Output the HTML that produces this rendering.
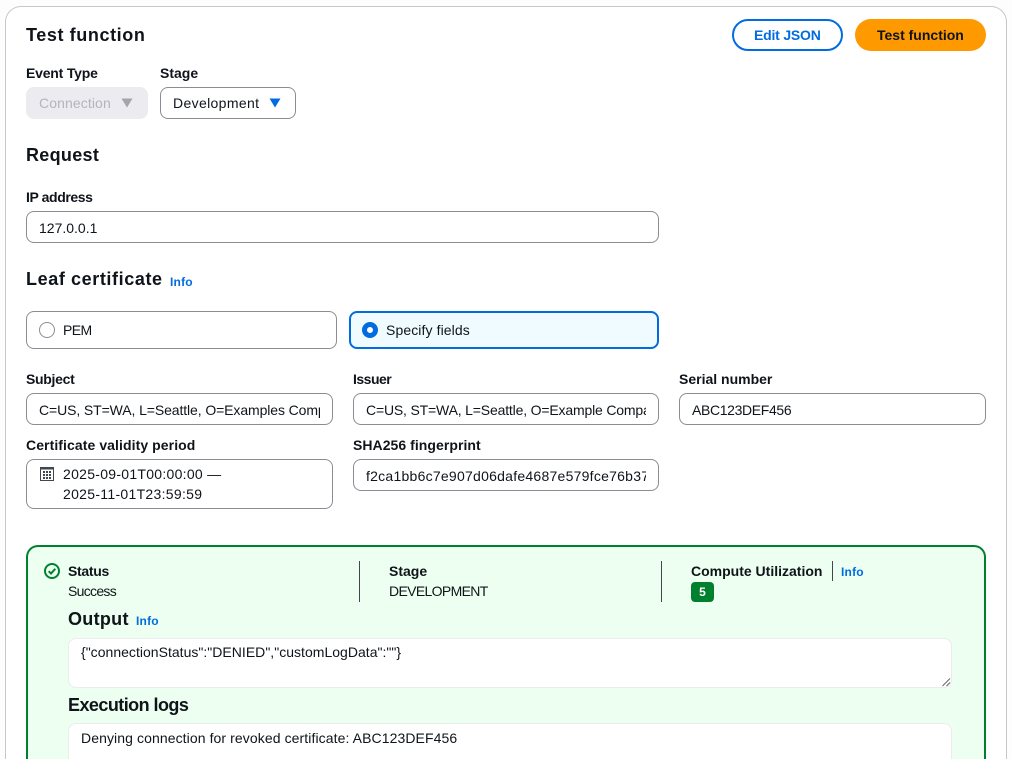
<!DOCTYPE html>
<html><head><meta charset="utf-8">
<style>
html,body{margin:0;padding:0;background:#fdfdfd;width:1012px;height:759px;overflow:hidden;}
#w{position:absolute;left:0;top:0;width:1012px;height:759px;overflow:hidden;font-family:"Liberation Sans",sans-serif;color:#0f141a;font-size:14px;}
.a{position:absolute;box-sizing:border-box;}
.t{position:absolute;white-space:nowrap;line-height:20px;}
.b{font-weight:bold;}
.h{font-weight:bold;font-size:18px;line-height:24px;position:absolute;white-space:nowrap;}
.i{position:absolute;white-space:nowrap;color:#006ce0;font-weight:bold;font-size:12px;line-height:14px;letter-spacing:.2px;}
.f{position:absolute;box-sizing:border-box;background:#fff;border:1px solid #8c8c94;border-radius:8px;height:32px;overflow:hidden;}
.f span{position:absolute;left:12px;right:12px;top:6px;line-height:20px;white-space:nowrap;overflow:hidden;}
</style></head><body><div id="w">
<div class="a" style="left:5px;top:6px;width:1002px;height:753px;background:#fff;border:1px solid #c6c6cd;border-bottom:0;border-radius:16px 16px 0 0;"></div>

<div class="h" style="left:26px;top:23px;letter-spacing:.6px;">Test function</div>
<div class="a" style="left:732px;top:19px;width:111px;height:32px;border:2px solid #006ce0;border-radius:16px;background:#fff;"></div>
<div class="t b" style="left:754px;top:25px;color:#006ce0;letter-spacing:-.2px;">Edit JSON</div>
<div class="a" style="left:855px;top:19px;width:131px;height:32px;border-radius:16px;background:#ff9900;"></div>
<div class="t b" style="left:877px;top:25px;">Test function</div>

<div class="t b" style="left:26px;top:63px;letter-spacing:-.2px;">Event Type</div>
<div class="t b" style="left:160px;top:63px;">Stage</div>
<div class="a" style="left:26px;top:87px;width:122px;height:32px;background:#ebebf0;border-radius:8px;"></div>
<div class="t" style="left:39px;top:93px;color:#b4b4bb;letter-spacing:.1px;">Connection</div>
<svg class="a" style="left:121px;top:98px;" width="12" height="10"><path d="M0.5 0.5H11.5L6 9.5Z" fill="#a4a4ad"/></svg>
<div class="a" style="left:160px;top:87px;width:136px;height:32px;background:#fff;border:1px solid #8c8c94;border-radius:8px;"></div>
<div class="t" style="left:173px;top:93px;letter-spacing:.35px;">Development</div>
<svg class="a" style="left:269px;top:98px;" width="12" height="10"><path d="M0.5 0.5H11.5L6 9.5Z" fill="#006ce0"/></svg>

<div class="h" style="left:26px;top:143px;letter-spacing:.3px;">Request</div>
<div class="t b" style="left:26px;top:187px;letter-spacing:-.4px;">IP address</div>
<div class="f" style="left:26px;top:211px;width:633px;"><span>127.0.0.1</span></div>

<div class="h" style="left:26px;top:267px;letter-spacing:.6px;">Leaf certificate</div>
<div class="i" style="left:170px;top:275px;">Info</div>

<div class="a" style="left:26px;top:311px;width:311px;height:38px;background:#fff;border:1px solid #8c8c94;border-radius:8px;"></div>
<div class="a" style="left:39px;top:322px;width:16px;height:16px;border:1px solid #8c8c94;border-radius:50%;background:#fff;"></div>
<div class="t" style="left:63px;top:320px;letter-spacing:-.6px;">PEM</div>
<div class="a" style="left:349px;top:311px;width:310px;height:38px;background:#f0fbff;border:2px solid #006ce0;border-radius:8px;"></div>
<div class="a" style="left:362px;top:322px;width:16px;height:16px;border:5px solid #006ce0;border-radius:50%;background:#fff;"></div>
<div class="t" style="left:386px;top:320px;letter-spacing:.1px;">Specify fields</div>

<div class="t b" style="left:26px;top:369px;letter-spacing:-.3px;">Subject</div>
<div class="t b" style="left:353px;top:369px;letter-spacing:-.5px;">Issuer</div>
<div class="t b" style="left:679px;top:369px;">Serial number</div>
<div class="f" style="left:26px;top:393px;width:307px;"><span style="letter-spacing:-.1px;">C=US, ST=WA, L=Seattle, O=Examples Company</span></div>
<div class="f" style="left:353px;top:393px;width:306px;"><span style="letter-spacing:-.17px;">C=US, ST=WA, L=Seattle, O=Example Company</span></div>
<div class="f" style="left:679px;top:393px;width:307px;"><span style="letter-spacing:-.35px;">ABC123DEF456</span></div>

<div class="t b" style="left:26px;top:435px;letter-spacing:.08px;">Certificate validity period</div>
<div class="t b" style="left:353px;top:435px;letter-spacing:.05px;">SHA256 fingerprint</div>
<div class="a" style="left:26px;top:459px;width:307px;height:50px;background:#fff;border:1px solid #8c8c94;border-radius:8px;"></div>
<svg class="a" style="left:40px;top:467px;" width="14" height="14" viewBox="0 0 14 14"><rect x="0.5" y="0.5" width="13" height="13" fill="#fff" stroke="#424650"/><rect x="0" y="0" width="14" height="2.5" fill="#424650"/><g fill="#424650"><rect x="3" y="4" width="2" height="2"/><rect x="6" y="4" width="2" height="2"/><rect x="9" y="4" width="2" height="2"/><rect x="3" y="7" width="2" height="2"/><rect x="6" y="7" width="2" height="2"/><rect x="9" y="7" width="2" height="2"/><rect x="3" y="10" width="2" height="2"/><rect x="6" y="10" width="2" height="2"/><rect x="9" y="10" width="2" height="2"/></g></svg>
<div class="t" style="left:63px;top:464px;letter-spacing:.28px;">2025-09-01T00:00:00 —</div>
<div class="t" style="left:63px;top:484px;letter-spacing:.3px;">2025-11-01T23:59:59</div>
<div class="f" style="left:353px;top:459px;width:306px;"><span style="letter-spacing:.25px;">f2ca1bb6c7e907d06dafe4687e579fce76b37e4e93b7605022da52e6ccc26fd2</span></div>

<div class="a" style="left:26px;top:545px;width:960px;height:214px;background:#edfff0;border:2px solid #00802f;border-bottom:0;border-radius:12px 12px 0 0;"></div>
<svg class="a" style="left:44px;top:563px;" width="16" height="16" viewBox="0 0 16 16" fill="none" stroke="#00802f" stroke-width="2"><circle cx="8" cy="8" r="7"/><path d="M4.7 8.2 7 10.5 11.3 5.8"/></svg>
<div class="t b" style="left:68px;top:561px;letter-spacing:-.3px;">Status</div>
<div class="t" style="left:68px;top:581px;letter-spacing:-.7px;">Success</div>
<div class="a" style="left:359px;top:561px;width:1px;height:41px;background:#424650;"></div>
<div class="t b" style="left:389px;top:561px;">Stage</div>
<div class="t" style="left:389px;top:581px;letter-spacing:-.65px;">DEVELOPMENT</div>
<div class="a" style="left:661px;top:561px;width:1px;height:41px;background:#424650;"></div>
<div class="t b" style="left:691px;top:561px;">Compute Utilization</div>
<div class="a" style="left:832px;top:561px;width:1px;height:20px;background:#424650;"></div>
<div class="i" style="left:841px;top:565px;">Info</div>
<div class="a" style="left:691px;top:582px;width:23px;height:20px;background:#00802f;border-radius:4px;color:#fff;font-weight:bold;font-size:12px;line-height:20px;text-align:center;">5</div>

<div class="h" style="left:68px;top:607px;letter-spacing:.3px;">Output</div>
<div class="i" style="left:136px;top:614px;">Info</div>
<div class="a" style="left:68px;top:638px;width:884px;height:50px;background:#fff;border:1px solid #ebebf0;border-radius:8px;"></div>
<svg class="a" style="left:942px;top:678px;" width="9" height="9"><path d="M0.5 8 8 0.5M4.5 8 8 4.5" stroke="#666" stroke-width="1" fill="none"/></svg>
<div class="t" style="left:81px;top:642px;letter-spacing:.02px;">{"connectionStatus":"DENIED","customLogData":""}</div>

<div class="h" style="left:68px;top:693px;letter-spacing:-.55px;">Execution logs</div>
<div class="a" style="left:68px;top:723px;width:884px;height:36px;background:#fff;border:1px solid #ebebf0;border-bottom:0;border-radius:8px 8px 0 0;"></div>
<div class="t" style="left:81px;top:728px;letter-spacing:.09px;">Denying connection for revoked certificate: ABC123DEF456</div>
</div></body></html>
